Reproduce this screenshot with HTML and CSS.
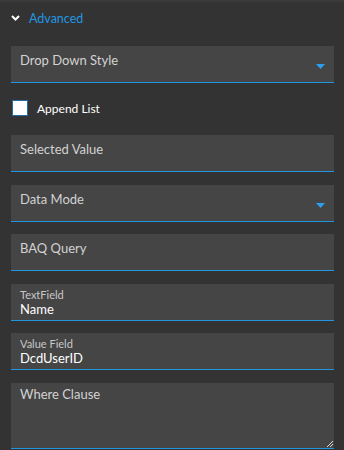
FILE: index.html
```html
<!DOCTYPE html>
<html lang="en">
<head>
<meta charset="UTF-8">
<meta name="viewport" content="width=device-width, initial-scale=1.0">
<title>Advanced Properties</title>
<link rel="stylesheet" href="styles.css">
</head>
<body>
<div class="panel">
  <div class="section-head">
    <svg class="chevron" width="9" height="6" viewBox="0 0 9 6">
      <polyline points="1,1 4.5,4.5 8,1" fill="none" stroke="#fff" stroke-width="2"/>
    </svg>
    <span>Advanced</span>
  </div>

  <div class="fields">
    <div class="field select">
      <span class="label">Drop Down Style</span>
      <svg class="caret" width="9" height="5" viewBox="0 0 9 5"><polygon points="0,0 9,0 4.5,5" fill="#2b9ff0"/></svg>
    </div>

    <label class="check-row">
      <span class="checkbox"></span>
      <span>Append List</span>
    </label>

    <div class="stack">
      <div class="field">
        <span class="label">Selected Value</span>
      </div>
      <div class="field select">
        <span class="label">Data Mode</span>
        <svg class="caret" width="9" height="5" viewBox="0 0 9 5"><polygon points="0,0 9,0 4.5,5" fill="#2b9ff0"/></svg>
      </div>
      <div class="field">
        <span class="label">BAQ Query</span>
      </div>
      <div class="field filled">
        <span class="small-label">TextField</span>
        <span class="value">Name</span>
      </div>
      <div class="field filled">
        <span class="small-label">Value Field</span>
        <span class="value">DcdUserID</span>
      </div>
      <div class="field area">
        <span class="label">Where Clause</span>
        <svg class="grip" width="7" height="7" viewBox="0 0 7 7">
          <line x1="1" y1="7" x2="7" y2="1" stroke="#ddd" stroke-width="1"/>
          <line x1="4" y1="7" x2="7" y2="4" stroke="#ddd" stroke-width="1"/>
        </svg>
      </div>
    </div>
  </div>
</div>
</body>
</html>
```

FILE: styles.css
```css
body {
  margin: 0;
  background-color: #333333;
  font-family: Lato, "Open Sans", sans-serif;
}

.panel {
  width: 344px;
  height: 450px;
  border-top: 2px solid #3b3b3b;
  box-sizing: border-box;
  overflow: hidden;
}

.section-head {
  display: flex;
  align-items: center;
  height: 32px;
  padding-left: 11px;
  color: #2196e0;
  font-size: 12.5px;
}

.chevron {
  margin-right: 9px;
}

.fields {
  display: flex;
  flex-direction: column;
  padding: 12px 10px 0 11px;
}

.field {
  position: relative;
  display: flex;
  flex-direction: column;
  height: 37px;
  padding: 6px 9px 0;
  box-sizing: border-box;
  background: #454545;
  border-bottom: 1px solid #2196e0;
}

.label {
  color: #d2d2d2;
  font-size: 13px;
  line-height: 17px;
}

.caret {
  position: absolute;
  right: 9px;
  top: 18px;
}

.check-row {
  display: flex;
  align-items: center;
  gap: 9px;
  margin: 17px 0 19px 1px;
  color: #ffffff;
  font-size: 12px;
  height: 16px;
}

.checkbox {
  width: 16px;
  height: 16px;
  box-sizing: border-box;
  background: #ffffff;
  border: 1px solid #1f6fa6;
}

.stack {
  display: flex;
  flex-direction: column;
  gap: 12.5px;
}

.filled {
  padding-top: 5px;
}

.small-label {
  color: #c8c8c8;
  font-size: 11px;
  line-height: 12px;
}

.value {
  color: #ffffff;
  font-size: 13px;
  line-height: 16px;
}

.area {
  height: 66px;
  padding-top: 3px;
}

.grip {
  position: absolute;
  right: 1px;
  bottom: 1px;
}
```
